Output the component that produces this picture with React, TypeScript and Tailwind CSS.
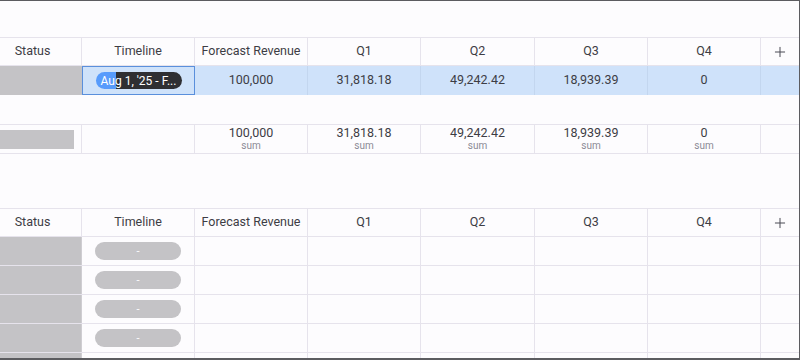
import React from 'react';
import { Plus } from 'lucide-react';

const cols = 'grid grid-cols-[82px_113px_113px_113px_114px_113px_113px_1fr]';
const line = 'border-[#e6e3ec]';
const headers = ['Timeline', 'Forecast Revenue', 'Q1', 'Q2', 'Q3', 'Q4'];

const HeaderRow: React.FC = () => (
  <div className={`${cols} h-[29px] border-t border-b ${line} text-[12.5px] text-[#3d3d45]`}>
    <div className={`flex items-center justify-center pr-[16px] border-r ${line}`}>Status</div>
    {headers.map(h => (
      <div key={h} className={`flex items-center justify-center border-r ${line}`}>
        {h}
      </div>
    ))}
    <div className="flex items-center justify-center text-[#4b4b55]">
      <Plus size={16} strokeWidth={1.5} />
    </div>
  </div>
);

const sums = ['100,000', '31,818.18', '49,242.42', '18,939.39', '0'];

const App: React.FC = () => {
  return (
    <div
      className="w-[800px] h-[360px] overflow-hidden bg-[#fdfcfe] border-t border-r border-b-2 border-[#5c5c60]"
      style={{ fontFamily: 'Roboto, "Noto Sans", sans-serif' }}
    >
      {/* Top group */}
      <div className="mt-[36px]">
        <HeaderRow />

        {/* Selected item row */}
        <div className={`${cols} h-[29px]`}>
          <div className="bg-[#c4c3c6]" />
          <div className="flex items-center justify-center bg-[#cfe2fa] border border-[#5a8fdc]">
            <div className="w-[86px] h-[17px] rounded-full bg-[linear-gradient(to_right,#579bfc_23%,#2f2f33_23%)] flex items-center justify-center whitespace-nowrap overflow-hidden text-[12px] text-white leading-none">
              Aug 1, '25 - F...
            </div>
          </div>
          {sums.map((v, i) => (
            <div key={i} className="flex items-center justify-center bg-[#cfe2fa] border-r border-[#c3d6ef] text-[12.5px] text-[#3d3d45]">
              {v}
            </div>
          ))}
          <div className="bg-[#cfe2fa]" />
        </div>

        <div className="h-[29px]" />

        {/* Summary row */}
        <div className={`${cols} h-[30px] border-t border-b ${line}`}>
          <div className={`flex items-center pr-[7px] border-r ${line}`}>
            <div className="w-full h-[19px] bg-[#c4c3c6]" />
          </div>
          <div className={`border-r ${line}`} />
          {sums.map((v, i) => (
            <div key={i} className={`flex flex-col items-center justify-center border-r ${line} leading-none`}>
              <span className="text-[12.5px] text-[#3d3d45]">{v}</span>
              <span className="text-[10px] text-[#8b8a95] mt-[1px]">sum</span>
            </div>
          ))}
          <div />
        </div>
      </div>

      {/* Bottom group */}
      <div className="mt-[54px]">
        <HeaderRow />
        {[0, 1, 2, 3, 4].map(r => (
          <div key={r} className={`${cols} h-[29px] border-b ${line}`}>
            <div className="bg-[#c4c3c6] border-r border-[#cfcdd2]" />
            <div className={`flex items-center justify-center border-r ${line}`}>
              {r < 4 && (
                <div className="w-[86px] h-[18px] rounded-full bg-[#c4c3c6] flex items-center justify-center text-[11px] text-white leading-none">
                  -
                </div>
              )}
            </div>
            {[0, 1, 2, 3, 4].map(c => (
              <div key={c} className={`border-r ${line}`} />
            ))}
            <div />
          </div>
        ))}
      </div>
    </div>
  );
};

export default App;
